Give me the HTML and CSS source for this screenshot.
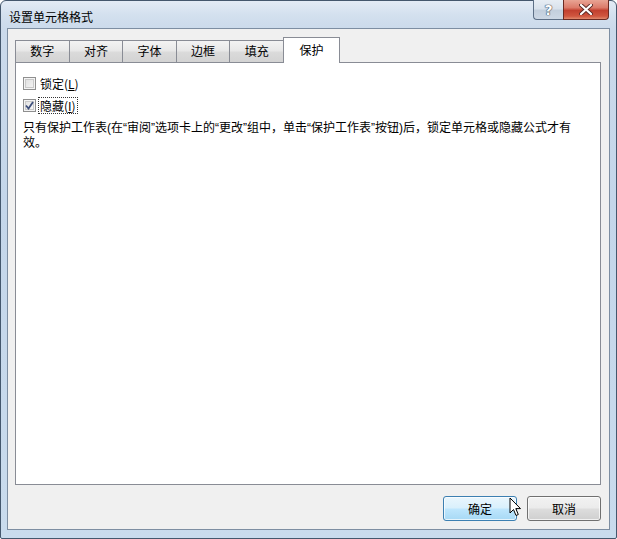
FILE: index.html
```html
<!DOCTYPE html>
<html lang="zh-CN">
<head>
<meta charset="utf-8">
<title>设置单元格格式</title>
<link rel="stylesheet" href="styles.css">
</head>
<body>
<div class="window">
  <div class="titlebar">
    <span class="title">设置单元格格式</span>
    <div class="caption-btns">
      <div class="cbtn help"><span class="qmark">?</span></div>
      <div class="cbtn close">
        <svg width="14" height="11" viewBox="0 0 14 11">
          <path d="M2 1 L12 10 M12 1 L2 10" stroke="#5a2a25" stroke-width="4" stroke-linecap="round"/>
          <path d="M2 1 L12 10 M12 1 L2 10" stroke="#ffffff" stroke-width="2.2" stroke-linecap="round"/>
        </svg>
      </div>
    </div>
  </div>
  <div class="client">
    <div class="tabs">
      <div class="tab">数字</div>
      <div class="tab">对齐</div>
      <div class="tab">字体</div>
      <div class="tab">边框</div>
      <div class="tab">填充</div>
      <div class="tab active">保护</div>
    </div>
    <div class="panel">
      <div class="check-row">
        <span class="box"></span>
        <span class="label">锁定(<u>L</u>)</span>
      </div>
      <div class="check-row">
        <span class="box checked">
          <svg width="9" height="9" viewBox="0 0 9 9"><path d="M1 4.5 L3.5 7.5 L8 1" fill="none" stroke="#3d4f7c" stroke-width="1.8"/></svg>
        </span>
        <span class="label focus">隐藏(<u>I</u>)</span>
      </div>
      <p class="note">只有保护工作表(在“审阅”选项卡上的“更改”组中，单击“保护工作表”按钮)后，锁定单元格或隐藏公式才有效。</p>
    </div>
    <div class="buttons">
      <div class="btn default">确定</div>
      <div class="btn">取消</div>
    </div>
  </div>
  <svg class="cursor" width="13" height="21" viewBox="0 0 13 21">
    <path d="M1 1 L1 16 L4.5 12.5 L7 18.5 L9.3 17.5 L6.8 11.6 L11.5 11.6 Z" fill="#ffffff" stroke="#000000" stroke-width="1" stroke-linejoin="miter"/>
  </svg>
</div>
</body>
</html>
```

FILE: styles.css
```css
* { box-sizing: border-box; }
html, body { margin: 0; padding: 0; background: #ffffff; }
body {
  font-family: "Liberation Sans", "Noto Sans CJK SC", sans-serif;
  font-size: 12px;
  color: #000;
}
.window {
  position: relative;
  width: 617px;
  height: 539px;
  border: 1px solid #44576d;
  border-radius: 6px 6px 2px 2px;
  background: linear-gradient(180deg, #e3ebf5 0px, #d3e0ee 14px, #cbdaeb 28px, #c4d6ea 200px, #c9dbed 539px);
  display: flex;
  flex-direction: column;
  padding: 0 6px 8px 6px;
}
.titlebar {
  height: 27px;
  display: flex;
  justify-content: space-between;
  align-items: flex-start;
}
.title {
  font-family: "Noto Sans CJK SC", sans-serif;
  font-size: 12px;
  line-height: 12px;
  margin-top: 10px;
  margin-left: 2px;
  color: #000;
}
.caption-btns {
  display: flex;
  margin-right: 1px;
  margin-top: -1px;
}
.cbtn {
  height: 20px;
  border: 1px solid #5d6f86;
  border-top: none;
  display: flex;
  align-items: center;
  justify-content: center;
}
.help {
  width: 30px;
  border-radius: 0 0 0 4px;
  border-right: none;
  background: linear-gradient(180deg, #e7edf4 0%, #d9e2ec 45%, #c3cfdd 55%, #cdd8e5 100%);
}
.qmark {
  font-family: "DejaVu Sans", sans-serif;
  font-weight: bold;
  font-size: 14px;
  color: #ffffff;
  text-shadow: 0 0 1px #39475a, 0 0 1px #39475a, 0 0 1px #39475a;
  line-height: 14px;
}
.close {
  width: 46px;
  border-radius: 0 0 4px 0;
  border-color: #6b2a22;
  background: linear-gradient(180deg, #e8a494 0%, #dc7b6a 40%, #c2402f 55%, #d0563f 85%, #e08a6e 100%);
}
.client {
  flex: 1;
  background: #f0f0f0;
  border: 1px solid #7d8ea2;
  padding: 8px 8px 8px 7px;
  display: flex;
  flex-direction: column;
}
.tabs {
  display: flex;
  align-items: flex-end;
  height: 25px;
}
.tab {
  width: 54.6px;
  height: 22px;
  margin-right: -1px;
  border: 1px solid #898c95;
  border-bottom: none;
  background: linear-gradient(180deg, #f3f3f3 0%, #e8e8e8 45%, #dadada 55%, #d3d3d3 100%);
  font-family: "Noto Sans CJK SC", sans-serif;
  font-size: 12px;
  line-height: 20px;
  text-align: center;
  color: #000;
}
.tab.active {
  position: relative;
  z-index: 2;
  width: 57px;
  height: 26px;
  margin-bottom: -1px;
  background: #ffffff;
  line-height: 24px;
}
.panel {
  flex: 1;
  background: #ffffff;
  border: 1px solid #898c95;
  padding: 12px 8px 0 7px;
  display: flex;
  flex-direction: column;
  gap: 5px;
}
.check-row {
  display: flex;
  align-items: center;
  height: 17px;
  gap: 2px;
}
.box {
  width: 13px;
  height: 13px;
  border: 1px solid #8f8f8f;
  background: linear-gradient(135deg, #dcdcdc, #f7f7f7);
  box-shadow: inset 0 0 0 1px #f4f4f4, inset 0 0 0 2px #c9c9c9;
  display: flex;
  align-items: center;
  justify-content: center;
}
.box.checked {
  background: linear-gradient(135deg, #e0e0e0, #fafafa);
}
.label {
  font-family: "Noto Sans CJK SC", sans-serif;
  padding: 0 1px 0 1px;
  height: 17px;
  line-height: 15px;
  border: 1px solid transparent;
}
.label u { text-underline-offset: 1px; }
.label.focus {
  border: 1px dotted #333333;
}
.note {
  margin: 2px 0 0 0;
  width: 562px;
  line-height: 15px;
  font-size: 12px;
  font-family: "Liberation Sans", "Noto Sans CJK SC", sans-serif;
}
.buttons {
  display: flex;
  justify-content: flex-end;
  gap: 10px;
  margin-top: 11px;
  padding-right: 0;
}
.btn {
  width: 74px;
  height: 25px;
  border: 1px solid #707070;
  border-radius: 3px;
  background: linear-gradient(180deg, #f2f2f2 0%, #ebebeb 48%, #dddddd 52%, #cfcfcf 100%);
  box-shadow: inset 0 0 0 1px rgba(255,255,255,0.7);
  font-family: "Noto Sans CJK SC", sans-serif;
  font-size: 12px;
  line-height: 23px;
  text-align: center;
}
.btn.default {
  border-color: #3c7fb1;
  background: linear-gradient(180deg, #eaf6fd 0%, #d9f0fc 48%, #bee6fd 52%, #a7d9f5 100%);
}
.cursor {
  position: absolute;
  left: 508px;
  top: 496px;
}
```
